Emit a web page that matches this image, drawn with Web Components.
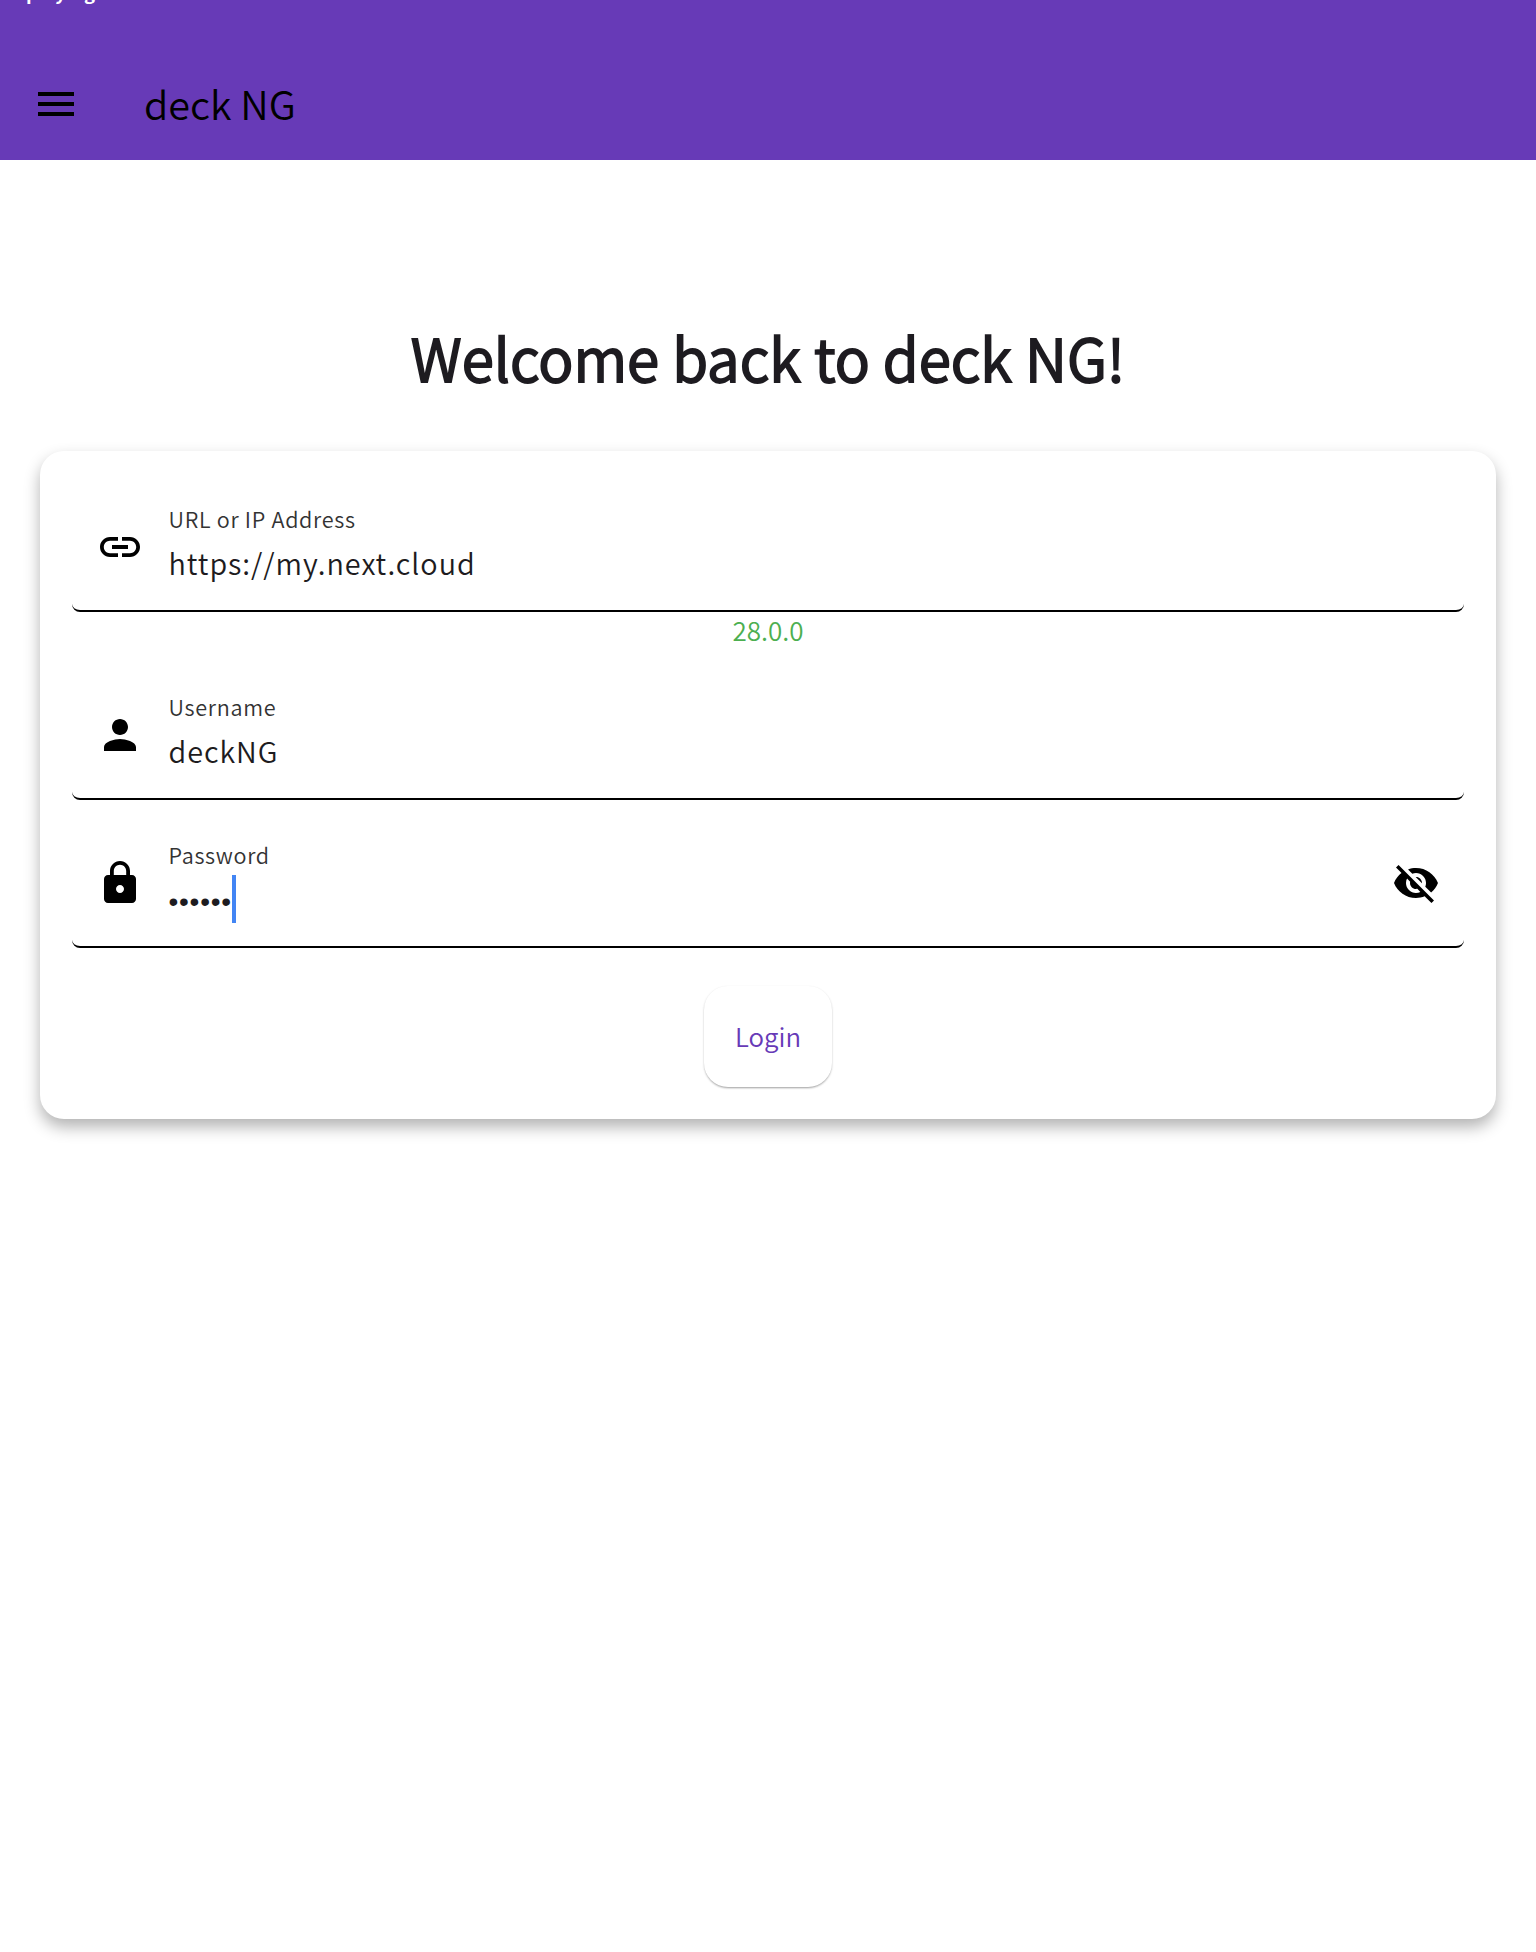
<!DOCTYPE html>
<html lang="en">
<head>
<meta charset="utf-8">
<title>deck NG</title>
<style>
html,body{margin:0;height:100%;background:#fff}
body{font-family:"Noto Sans CJK SC DemiLight","Noto Sans CJK JP DemiLight","Noto Sans CJK SC",sans-serif;font-weight:350;color:#1d1b20}
</style>
</head>
<body>
<login-page></login-page>
<script>
const define = (name, html) => customElements.define(name, class extends HTMLElement {
  constructor() {
    super();
    this.attachShadow({ mode: 'open' }).innerHTML = html;
  }
});

const ICONS = {
  menu: 'M3 18h18v-2H3v2zm0-5h18v-2H3v2zm0-7v2h18V6H3z',
  link: 'M3.9 12c0-1.71 1.39-3.1 3.1-3.1h4V7H7c-2.76 0-5 2.24-5 5s2.24 5 5 5h4v-1.9H7c-1.71 0-3.1-1.39-3.1-3.1zM8 13h8v-2H8v2zm9-6h-4v1.9h4c1.71 0 3.1 1.39 3.1 3.1s-1.39 3.1-3.1 3.1h-4V17h4c2.76 0 5-2.24 5-5s-2.24-5-5-5z',
  person: 'M12 12c2.21 0 4-1.79 4-4s-1.79-4-4-4-4 1.79-4 4 1.79 4 4 4zm0 2c-2.67 0-8 1.34-8 4v2h16v-2c0-2.66-5.33-4-8-4z',
  lock: 'M18 8h-1V6c0-2.76-2.24-5-5-5S7 3.24 7 6v2H6c-1.1 0-2 .9-2 2v10c0 1.1.9 2 2 2h12c1.1 0 2-.9 2-2V10c0-1.1-.9-2-2-2zm-6 9c-1.1 0-2-.9-2-2s.9-2 2-2 2 .9 2 2-.9 2-2 2zm3.1-9H8.9V6c0-1.71 1.39-3.1 3.1-3.1s3.1 1.39 3.1 3.1v2z',
  eyeoff: 'M12 7c2.76 0 5 2.24 5 5 0 .65-.13 1.26-.36 1.83l2.92 2.92c1.51-1.26 2.7-2.89 3.43-4.75-1.73-4.39-6-7.5-11-7.5-1.4 0-2.74.25-3.98.7l2.16 2.16C10.74 7.13 11.35 7 12 7zM2 4.27l2.28 2.28.46.46C3.08 8.3 1.78 10.02 1 12c1.73 4.39 6 7.5 11 7.5 1.55 0 3.03-.3 4.38-.84l.42.42L19.73 22 21 20.73 3.27 3 2 4.27zM7.53 9.8l1.55 1.55c-.05.21-.08.43-.08.65 0 1.66 1.34 3 3 3 .22 0 .44-.03.65-.08l1.55 1.55c-.67.33-1.41.53-2.2.53-2.76 0-5-2.24-5-5 0-.79.2-1.53.53-2.2zm4.31-.78l3.15 3.15.02-.16c0-1.66-1.34-3-3-3l-.17.01z'
};

customElements.define('md-icon', class extends HTMLElement {
  connectedCallback() {
    this.attachShadow({ mode: 'open' }).innerHTML = `<style>:host{display:block;width:48px;height:48px;flex:none;color:#000}svg{display:block}</style>
      <svg width="48" height="48" viewBox="0 0 24 24" fill="currentColor"><path d="${ICONS[this.getAttribute('name')]}"/></svg>`;
  }
});

define('app-bar', `<style>
:host{display:flex;flex-direction:column;justify-content:flex-end;height:160px;background:#673ab7;color:#000;overflow:hidden;position:relative}
.status{position:absolute;left:0;top:-20.5px;padding-left:26px;font:700 18.5px/24px "Noto Sans CJK SC",sans-serif;letter-spacing:.2px;color:#fff;white-space:pre}
.bar{display:flex;align-items:center;height:112px;padding:0 32px}
.title{margin-left:64px;margin-bottom:2px;font-size:39.6px;line-height:56px}
</style><div class="status"><slot name="status"></slot></div>
<div class="bar"><md-icon name="menu"></md-icon><div class="title"><slot></slot></div></div>`);

define('page-heading', `<style>
:host{display:block;height:87px;text-align:center;padding-top:153px;font-size:58.4px;line-height:88px;font-weight:700}
</style><slot></slot>`);

define('login-card', `<style>
:host{display:flex;flex-direction:column;box-sizing:border-box;margin:51px 40px 0;height:668px;padding:49px 32px 32px;border-radius:24px;background:#fff;
box-shadow:0 8px 16px rgba(0,0,0,.3)}
</style><slot></slot>`);

define('text-field', `<style>
:host{display:flex;box-sizing:border-box;height:112px;padding:0 24px;border-bottom:2px solid #000;border-radius:8px}
md-icon,::slotted(md-icon){margin-top:23px}
.body{flex:1;margin-left:24.5px;padding-top:4px}
.label{font-size:21.6px;line-height:30px;letter-spacing:.7px;color:#333;height:30px}
.value{display:flex;align-items:center;height:48px;margin-top:5px;font-size:28.8px;letter-spacing:.96px;line-height:48px}
</style><slot name="start"></slot><div class="body"><div class="label"><slot name="label"></slot></div><div class="value"><slot></slot></div></div><slot name="end"></slot>`);

define('text-caret', `<style>:host{display:block;width:4px;height:48px;margin-left:3px;background:#4285f4}</style>`);

define('version-note', `<style>:host{display:block;height:76px;text-align:center;color:#4caf50;font-size:26px;line-height:36px}</style><slot></slot>`);

define('login-button', `<style>
:host{display:flex;align-items:center;justify-content:center;align-self:center;box-sizing:border-box;width:128px;height:101px;padding-bottom:2px;margin-top:38px;border-radius:24px;background:#fff;color:#673ab7;font-size:25.8px;
box-shadow:0 2px 2px -1px rgba(0,0,0,.2),0 1px 2px rgba(0,0,0,.14),0 1px 3px rgba(0,0,0,.08)}
</style><slot></slot>`);

define('login-page', `<style>
:host{display:block;height:1952px;overflow:hidden;background:#fff}
.gap{margin-top:36px}
.dots{font-family:"Liberation Sans",sans-serif;font-size:28px;letter-spacing:.75px;width:60px;padding-top:6px}
</style>
<app-bar><span slot="status">playing</span>deck NG</app-bar>
<page-heading>Welcome back to deck NG!</page-heading>
<login-card>
<text-field><md-icon slot="start" name="link"></md-icon><span slot="label">URL or IP Address</span>https://my.next.cloud</text-field>
<version-note>28.0.0</version-note>
<text-field><md-icon slot="start" name="person"></md-icon><span slot="label">Username</span>deckNG</text-field>
<text-field class="gap"><md-icon slot="start" name="lock"></md-icon><span slot="label">Password</span><span class="dots">••••••</span><text-caret></text-caret><md-icon slot="end" name="eyeoff"></md-icon></text-field>
<login-button>Login</login-button>
</login-card>`);
</script>
</body>
</html>
